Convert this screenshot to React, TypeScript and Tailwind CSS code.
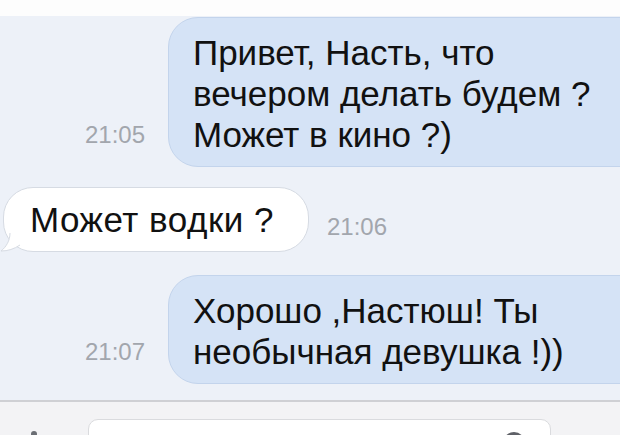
const font = "font-['Liberation_Sans','Helvetica_Neue',Arial,sans-serif]";

const Outgoing = ({ time, lines, top }: { time: string; lines: string[]; top: string }) => (
  <div className={`flex items-end ${top}`}>
    <div className="w-[168px] shrink-0 pr-[23px] mb-[20px] text-right text-[24px] leading-[24px] text-[#a2a6ad]">
      {time}
    </div>
    <div className="flex-1 -mr-[40px] rounded-[30px] bg-[#d5e3f6] border border-[#c3d4ec] pl-[24px] pt-[14px] pb-[11px] text-[35px] leading-[41px] text-[#111111]">
      {lines.map((l, i) => (
        <div key={i} className="whitespace-nowrap">{l}</div>
      ))}
    </div>
  </div>
);

export default function App() {
  return (
    <div className={`w-[620px] h-[435px] overflow-hidden bg-[#fdfdfd] flex flex-col ${font}`}>
      <div className="h-[16px] shrink-0" />

      {/* chat */}
      <div className="h-[384px] shrink-0 bg-[#edf1f8] flex flex-col">
        <Outgoing
          time="21:05"
          top="mt-[1px]"
          lines={["Привет, Насть, что", "вечером делать будем ?", "Может в кино ?)"]}
        />

        <div className="flex items-end mt-[20px]">
          <div className="relative ml-[3px] rounded-[30px] bg-white border border-[#d6dbe3] pl-[26px] pr-[34px] pt-[11px] pb-[11px] text-[35px] leading-[41px] tracking-[0.5px] text-[#111111] whitespace-nowrap">
            Может водки ?
            <svg className="absolute -left-[4px] bottom-[-2px]" width="22" height="20" viewBox="0 0 22 20">
              <path d="M10 0 C10 8 6 14 1 18 C8 18 14 16 20 12 Z" fill="#ffffff" />
              <path d="M10 0 C10 8 6 14 1 18 C8 18 14 16 20 12" fill="none" stroke="#d6dbe3" strokeWidth="1" />
            </svg>
          </div>
          <div className="ml-[18px] mb-[13px] text-[24px] leading-[24px] text-[#a2a6ad]">21:06</div>
        </div>

        <Outgoing
          time="21:07"
          top="mt-[23px]"
          lines={["Хорошо ,Настюш! Ты", "необычная девушка !))"]}
        />
      </div>

      {/* input bar */}
      <div className="flex-1 border-t-2 border-[#cfd0d4] bg-[#f3f3f5] flex items-start">
        <div className="w-[88px] shrink-0 flex justify-center pt-[29px] pr-[20px]">
          <div className="w-[6px] h-[6px] rounded-full bg-[#6b6e74]" />
        </div>
        <div className="mt-[17px] w-[463px] h-[40px] rounded-[10px] bg-white border border-[#dadbde] flex justify-end pr-[25px]">
          <div className="mt-[12px] w-[22px] h-[22px] rounded-full bg-[#5f6167]" />
        </div>
      </div>
    </div>
  );
}
